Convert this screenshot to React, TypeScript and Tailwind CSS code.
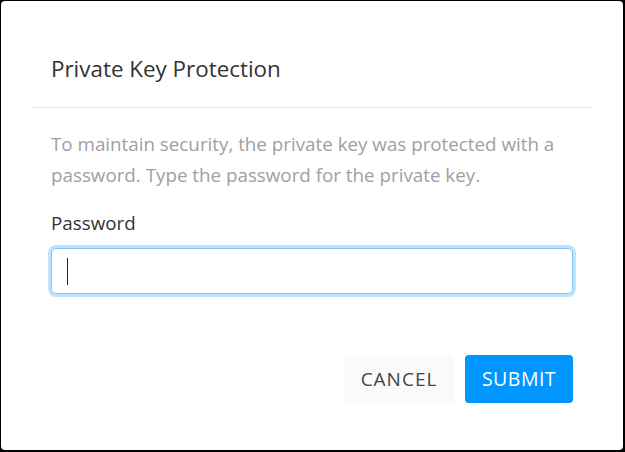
import React from 'react';

const App: React.FC = () => {
  return (
    <div className="w-[625px] h-[452px] bg-black pt-px pl-px pr-[2px] pb-[2px]" style={{ fontFamily: '"Open Sans", "Noto Sans", sans-serif' }}>
      <div className="h-full w-full bg-white rounded-[4px] flex flex-col">
        <div className="px-[50px] pt-[51px] pb-[22px]">
          <h1 className="text-[22.4px] leading-[33px] text-[#333] font-normal">Private Key Protection</h1>
        </div>
        <div className="mx-[30px] h-px bg-[#e8e8e8]" />
        <div className="px-[50px] pt-[21px]">
          <p className="text-[18.8px] leading-[31px] text-[#a0a0a0]">
            To maintain security, the private key was protected with a password. Type the password for the private key.
          </p>
          <label className="block mt-[19px] text-[18.8px] leading-[26px] text-[#333]">Password</label>
          <div className="mt-[12px] h-[46px] rounded-[5px] border border-[#84c4f3] ring-[3px] ring-[#bde3fd] bg-white flex items-center pl-[15px]">
            <div className="w-px h-[27px] bg-[#222]" />
          </div>
          <div className="flex justify-end gap-[11px] mt-[61px]">
            <button className="w-[110px] h-[48px] rounded-[4px] bg-[#fafafa] text-[19px] tracking-[1px] text-[#444]">CANCEL</button>
            <button className="w-[108px] h-[48px] rounded-[4px] bg-[#0096ff] text-[19.5px] tracking-[0.5px] text-white">SUBMIT</button>
          </div>
        </div>
      </div>
    </div>
  );
};

export default App;
